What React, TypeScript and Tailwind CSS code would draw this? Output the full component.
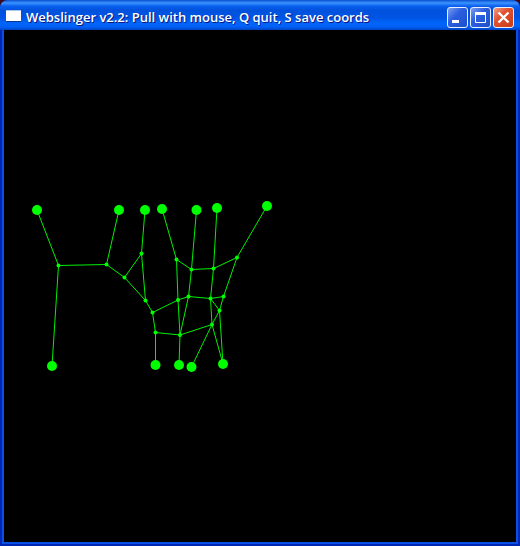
import React from "react";

type Point = [number, number];

const anchors: Record<string, Point> = {
  A: [33, 180], B: [115, 180], C: [141, 180], D: [158, 179], E: [192.5, 180], F: [213, 178], G: [263, 176],
  H: [48, 336], I: [151.5, 335], J: [175, 335], K: [187.5, 337], L: [219, 334],
};

const joints: Record<string, Point> = {
  a: [54.5, 235.5], b: [102.5, 234.5], c: [120.5, 247.5], d: [137.5, 223.5], e: [172.5, 229.5],
  f: [187.5, 239.5], g: [209.5, 238.5], h: [233, 227.5], i: [141.5, 270.5], j: [148.5, 282.5],
  k: [174, 270], l: [184.5, 266.5], m: [206.5, 268.5], n: [219.5, 266.5], o: [215.5, 280.5],
  p: [151.5, 302.5], q: [176, 305], r: [208, 294.5],
};

const threads = [
  "Aa", "aH", "ab", "bB", "bc", "cd", "dC", "ci", "di", "ij", "jp", "pI", "jk", "De", "ef", "ek",
  "Ef", "fl", "fg", "Fg", "gh", "Gh", "gm", "hn", "kl", "lm", "mn", "kq", "lq", "mo", "no", "mr",
  "or", "pq", "qr", "qJ", "rK", "rL", "oL",
];

const points: Record<string, Point> = { ...anchors, ...joints };

const captionButton =
  "flex h-[21px] w-[21px] items-center justify-center rounded-[3px] border border-[#e8efff]";

function TitleBar() {
  return (
    <header className="flex h-[30px] shrink-0 items-center rounded-t-lg bg-[linear-gradient(to_bottom,#0a50d0_0px,#3c94ff_3px,#0b60f0_6px,#0052dc_10px,#0054e4_18px,#0065fb_23px,#0060f6_27px,#0042c0_30px)] pt-1 pr-[6px] pl-[6px]">
      <svg width="15" height="12" viewBox="0 0 15 12" className="mb-[3px] shrink-0" aria-hidden="true">
        <rect width="15" height="11" fill="#fff" />
        <path d="M0 .5H15" stroke="#a9c8f0" />
        <path d="M0 11.5H15" stroke="#0a3696" />
      </svg>
      <h1 className="ml-[5px] min-w-0 flex-1 truncate font-['Open_Sans',sans-serif] text-[13px] leading-5 font-semibold text-white [text-shadow:1px_1px_0_#0a1883]">
        Webslinger v2.2: Pull with mouse, Q quit, S save coords
      </h1>
      <div className="flex shrink-0 gap-[2px]">
        <button type="button" aria-label="Minimize" className={`${captionButton} bg-[linear-gradient(135deg,#7e9ff0,#2c5fe0_40%,#1c4fc8)]`}>
          <svg width="19" height="19" viewBox="0 0 19 19"><path d="M4 13.5H11" stroke="#fff" strokeWidth="3" /></svg>
        </button>
        <button type="button" aria-label="Maximize" className={`${captionButton} bg-[linear-gradient(135deg,#7e9ff0,#2c5fe0_40%,#1c4fc8)]`}>
          <svg width="19" height="19" viewBox="0 0 19 19"><path d="M4.5 5V14.5H14.5V5" fill="none" stroke="#fff" /><path d="M4 5.5H15" stroke="#fff" strokeWidth="3" /></svg>
        </button>
        <button type="button" aria-label="Close" className={`${captionButton} bg-[linear-gradient(135deg,#f0a088,#e05030_40%,#c83c14)]`}>
          <svg width="19" height="19" viewBox="0 0 19 19"><path d="M4.5 4.5L14.5 14.5M14.5 4.5L4.5 14.5" stroke="#fff" strokeWidth="2.4" /></svg>
        </button>
      </div>
    </header>
  );
}

function Web() {
  return (
    <svg viewBox="0 0 512 512" className="block w-full" role="img" aria-label="Web of threads">
      <g stroke="#00f000" strokeWidth="1">
        {threads.map((t) => {
          const [x1, y1] = points[t[0]];
          const [x2, y2] = points[t[1]];
          return <line key={t} x1={x1} y1={y1} x2={x2} y2={y2} />;
        })}
      </g>
      <g fill="#00ff00">
        {Object.entries(anchors).map(([k, [x, y]]) => <circle key={k} cx={x} cy={y} r="5" />)}
        {Object.entries(joints).map(([k, [x, y]]) => <circle key={k} cx={x} cy={y} r="2" />)}
      </g>
    </svg>
  );
}

export default function App() {
  return (
    <div className="min-h-screen bg-[#3a0a20]">
      <div className="flex min-h-screen flex-col rounded-t-lg bg-[#0038c8]">
        <TitleBar />
        <div className="flex flex-1 flex-col border-x-2 border-b-2 border-[#0026b4]">
          <main className="flex-1 border-x-2 border-b-2 border-[#0a50e4] bg-black">
            <Web />
          </main>
        </div>
      </div>
    </div>
  );
}
